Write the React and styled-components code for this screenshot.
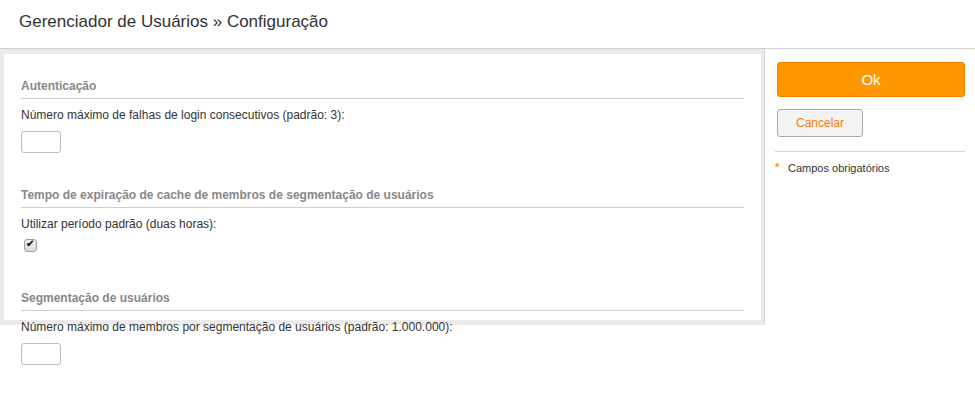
import React from 'react';
import { styled, createGlobalStyle } from 'styled-components';

const GlobalStyle = createGlobalStyle`
  html, body, #root {
    min-height: 100vh;
  }
  body {
    margin: 0;
    background: #fff;
    font-family: 'Liberation Sans', Arial, sans-serif;
    color: #333;
  }
`;

const sections = [
  {
    title: 'Autenticação',
    label: 'Número máximo de falhas de login consecutivos (padrão: 3):',
    type: 'text',
    gap: 34,
  },
  {
    title: 'Tempo de expiração de cache de membros de segmentação de usuários',
    label: 'Utilizar período padrão (duas horas):',
    type: 'check',
    gap: 37,
  },
  {
    title: 'Segmentação de usuários',
    label: 'Número máximo de membros por segmentação de usuários (padrão: 1.000.000):',
    type: 'text',
    gap: 0,
  },
];

const App = () => {
  return (
    <>
      <GlobalStyle />
      <Header>
        <Title>Gerenciador de Usuários » Configuração</Title>
      </Header>
      <Body>
        <Main>
          <Panel>
            {sections.map((s) => (
              <Section key={s.title} $gap={s.gap}>
                <SectionTitle>{s.title}</SectionTitle>
                <Label>{s.label}</Label>
                {s.type === 'text' ? (
                  <TextInput type="text" />
                ) : (
                  <CheckRow>
                    <Check type="checkbox" defaultChecked />
                  </CheckRow>
                )}
              </Section>
            ))}
          </Panel>
        </Main>
        <Side>
          <OkButton>Ok</OkButton>
          <CancelButton>Cancelar</CancelButton>
          <Divider />
          <Required>
            <Star>*</Star>
            Campos obrigatórios
          </Required>
        </Side>
      </Body>
    </>
  );
};

export default App;

const Header = styled.header`
  display: flex;
  align-items: center;
  height: 49px;
  box-sizing: border-box;
  padding-left: 19px;
  border-bottom: 1px solid #d2d2d2;
`;
const Title = styled.h1`
  margin: -5px 0 0 0;
  font-size: 17px;
  font-weight: 400;
  color: #333;
`;
const Body = styled.div`
  display: flex;
  align-items: flex-start;
  min-height: 351px;
`;
const Main = styled.div`
  width: 765px;
  height: 276px;
  box-sizing: border-box;
  padding: 5px 3px 5px 4px;
  background: #ebebeb;
  border-right: 1px solid #d8d8d8;
`;
const Panel = styled.div`
  height: 266px;
  box-sizing: border-box;
  padding: 24px 17px 0 17px;
  background: #fff;
`;
const Section = styled.section`
  margin-bottom: ${(p) => p.$gap}px;
`;
const SectionTitle = styled.h2`
  margin: 0;
  padding-bottom: 4px;
  border-bottom: 1px solid #cfcfcf;
  font-size: 12px;
  line-height: 16px;
  font-weight: 700;
  color: #888;
`;
const Label = styled.div`
  margin-top: 8px;
  font-size: 12px;
  line-height: 16px;
  color: #333;
`;
const TextInput = styled.input`
  display: block;
  margin-top: 8px;
  width: 40px;
  height: 22px;
  box-sizing: border-box;
  border: 1px solid #bdbdbd;
  border-radius: 3px;
  padding: 2px 4px;
  font-size: 12px;
`;
const CheckRow = styled.div`
  display: flex;
  margin-top: 7px;
  padding-left: 3px;
  height: 14px;
`;
const Check = styled.input`
  appearance: none;
  position: relative;
  margin: 0;
  width: 13px;
  height: 13px;
  box-sizing: border-box;
  border: 1px solid #a0a0a0;
  border-radius: 3px;
  background: linear-gradient(#eeeeee, #dddddd);
  &:checked::after {
    content: '✔';
    position: absolute;
    left: 1px;
    top: -2px;
    font-size: 10px;
    font-weight: 700;
    color: #222;
  }
`;
const Side = styled.aside`
  width: 210px;
  padding: 13px 10px 0 12px;
  box-sizing: border-box;
  display: flex;
  flex-direction: column;
  align-items: flex-start;
`;
const OkButton = styled.button`
  width: 100%;
  height: 35px;
  border: 1px solid #f08000;
  border-radius: 3px;
  background: #ff9800;
  color: #fff;
  font-family: 'Liberation Sans', Arial, sans-serif;
  font-size: 15px;
`;
const CancelButton = styled.button`
  margin-top: 12px;
  width: 86px;
  height: 28px;
  border: 1px solid #aaa;
  border-radius: 3px;
  background: #f3f3f3;
  color: #f57c00;
  font-family: 'Liberation Sans', Arial, sans-serif;
  font-size: 12px;
`;
const Divider = styled.hr`
  align-self: stretch;
  margin: 14px 0 0 -2px;
  border: 0;
  border-top: 1px solid #d6d6d6;
`;
const Required = styled.div`
  display: flex;
  align-items: center;
  margin: 9px 0 0 -2px;
  font-size: 11px;
  line-height: 14px;
  color: #333;
`;
const Star = styled.span`
  width: 13px;
  margin-top: -2px;
  color: #f90;
  font-weight: 700;
  font-size: 11px;
`;
